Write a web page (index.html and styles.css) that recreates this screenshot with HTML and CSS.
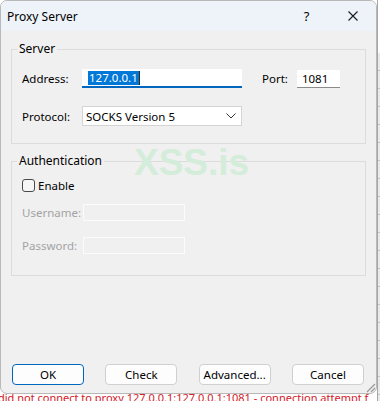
FILE: index.html
```html
<!DOCTYPE html>
<html lang="en">
  <head>
    <meta charset="UTF-8" />
    <title>Proxy Server</title>
    <link rel="stylesheet" href="styles.css">
  </head>
  <body>
    <div class="desktop">
      <div class="dialog">
        <div class="titlebar">
          <span class="title">Proxy Server</span>
          <span class="help">?</span>
          <span class="close">
            <svg width="10" height="10" viewBox="0 0 10 10"><path d="M0.5 0.5L9.5 9.5M9.5 0.5L0.5 9.5" stroke="#1a1a1a" stroke-width="1.1" fill="none"/></svg>
          </span>
        </div>

        <div class="content">
          <fieldset class="group server">
            <legend>Server</legend>
            <div class="row">
              <span class="lbl">Address:</span>
              <div class="field address"><span class="sel">127.0.0.1</span><span class="caret"></span></div>
              <span class="lbl port-lbl">Port:</span>
              <div class="field port">1081</div>
            </div>
            <div class="row row-protocol">
              <span class="lbl">Protocol:</span>
              <div class="combo">
                <span>SOCKS Version 5</span>
                <svg width="10" height="6" viewBox="0 0 10 6"><path d="M0.5 0.5L5 5L9.5 0.5" stroke="#333" stroke-width="1" fill="none"/></svg>
              </div>
            </div>
          </fieldset>

          <fieldset class="group auth">
            <legend>Authentication</legend>
            <div class="check-row">
              <span class="checkbox"></span>
              <span>Enable</span>
            </div>
            <div class="row row-user">
              <span class="lbl disabled">Username:</span>
              <div class="field off"></div>
            </div>
            <div class="row row-pass">
              <span class="lbl disabled">Password:</span>
              <div class="field off"></div>
            </div>
          </fieldset>

          <div class="buttons">
            <button class="btn default">OK</button>
            <button class="btn">Check</button>
            <button class="btn">Advanced...</button>
            <button class="btn">Cancel</button>
          </div>
        </div>

        <div class="watermark">XSS.is</div>
        <svg class="grip" width="11" height="11" viewBox="0 0 11 11"><path d="M10 2L2 10M10 6L6 10" stroke="#9a9a9a" stroke-width="1.2" fill="none"/></svg>
      </div>

      <div class="strip"></div>
      <div class="log">did not connect to proxy 127.0.0.1:127.0.0.1:1081 - connection attempt f</div>
    </div>
  </body>
</html>
```

FILE: styles.css
```css
* {
  box-sizing: border-box;
}

body {
  margin: 0;
  background: #fff;
  font-family: "Noto Sans", "Liberation Sans", sans-serif;
  font-size: 11.5px;
  color: #000;
  overflow: hidden;
}

.desktop {
  display: grid;
  grid-template-columns: 377px 3px;
  grid-template-rows: 394px 7px;
  width: 380px;
  height: 401px;
  overflow: hidden;
}

.dialog {
  grid-column: 1;
  grid-row: 1;
  position: relative;
  z-index: 1;
  display: flex;
  flex-direction: column;
  background: #f0f0f0;
  border: 1px solid #b9b9b9;
  border-radius: 7px;
  overflow: hidden;
}

.titlebar {
  display: flex;
  align-items: center;
  height: 30px;
  padding-left: 6px;
  background: #eef3f9;
  font-size: 12px;
}

.title {
  flex: 1;
}

.help,
.close {
  width: 46px;
  display: flex;
  justify-content: center;
  align-items: center;
}

.help {
  font-size: 13px;
  padding-right: 1px;
}

.content {
  flex: 1;
  display: flex;
  flex-direction: column;
  padding: 0 10px;
}

.group {
  margin: 0;
  border: 1px solid #dcdcdc;
  padding: 0 10px;
}

.group legend {
  margin-left: -5px;
  padding: 0 2px;
  line-height: 16px;
  font-size: 12px;
}

.server {
  margin-top: 10px;
  padding-top: 12px;
  padding-bottom: 17px;
}

.auth {
  margin-top: 9px;
  padding-top: 8px;
  padding-bottom: 21px;
}

.row {
  display: flex;
  align-items: center;
}

.lbl {
  width: 60px;
}

.lbl.disabled {
  color: #a3a3a3;
}

.field {
  background: #fff;
  height: 19px;
  padding-left: 5px;
  display: flex;
  align-items: center;
}

.address {
  width: 160px;
  border-bottom: 2px solid #0067c0;
  padding-left: 6px;
}

.sel {
  background: #0078d7;
  color: #fff;
  line-height: 14px;
  padding: 0 1px;
}

.caret {
  width: 1px;
  height: 14px;
  background: #3a2a10;
}

.port-lbl {
  width: auto;
  margin-left: 20px;
  margin-right: 9px;
}

.port {
  width: 43px;
  height: 18px;
  border-bottom: 1px solid #8a8a8a;
}

.row-protocol {
  margin-top: 18px;
}

.combo {
  width: 160px;
  height: 20px;
  background: #fff;
  border: 1px solid #d4d4d4;
  padding: 0 5px 0 3px;
  display: flex;
  align-items: center;
  justify-content: space-between;
}

.check-row {
  display: flex;
  align-items: center;
  height: 16px;
  gap: 3px;
}

.checkbox {
  width: 13px;
  height: 13px;
  border: 1px solid #4a4a4a;
  border-radius: 3px;
  background: #f6f6f6;
}

.row-user {
  margin-top: 11px;
}

.row-pass {
  margin-top: 16px;
}

.field.off {
  width: 102px;
  height: 17px;
  margin-left: 1px;
  background: #f0f0f0;
  border: 1px solid #fbfbfb;
}

.buttons {
  margin-top: auto;
  margin-bottom: 8px;
  padding: 0 2px 0 1px;
  display: flex;
  justify-content: space-between;
}

.btn {
  width: 72px;
  height: 21px;
  padding: 0;
  font-family: inherit;
  font-size: 11.5px;
  color: #000;
  background: #fdfdfd;
  border: 1px solid #d0d0d0;
  border-radius: 4px;
}

.btn.default {
  border-color: #0067c0;
}

.watermark {
  position: absolute;
  left: 133px;
  top: 144px;
  font-family: "Liberation Sans", sans-serif;
  font-weight: bold;
  font-size: 37px;
  line-height: 36px;
  color: #d4edda;
}

.grip {
  position: absolute;
  right: 0;
  bottom: 0;
}

.strip {
  grid-column: 2;
  grid-row: 1 / 3;
  background:
    repeating-linear-gradient(to bottom, #e9e9e9 0 17px, #c4c4c4 17px 18px) 0 53px / 100% 100% no-repeat,
    #fff;
  border-left: 1px solid #a6a6a6;
}

.log {
  grid-column: 1;
  grid-row: 2;
  line-height: 7px;
  font-size: 11px;
  color: #d3202a;
  white-space: nowrap;
  margin-left: -2px;
}
```
